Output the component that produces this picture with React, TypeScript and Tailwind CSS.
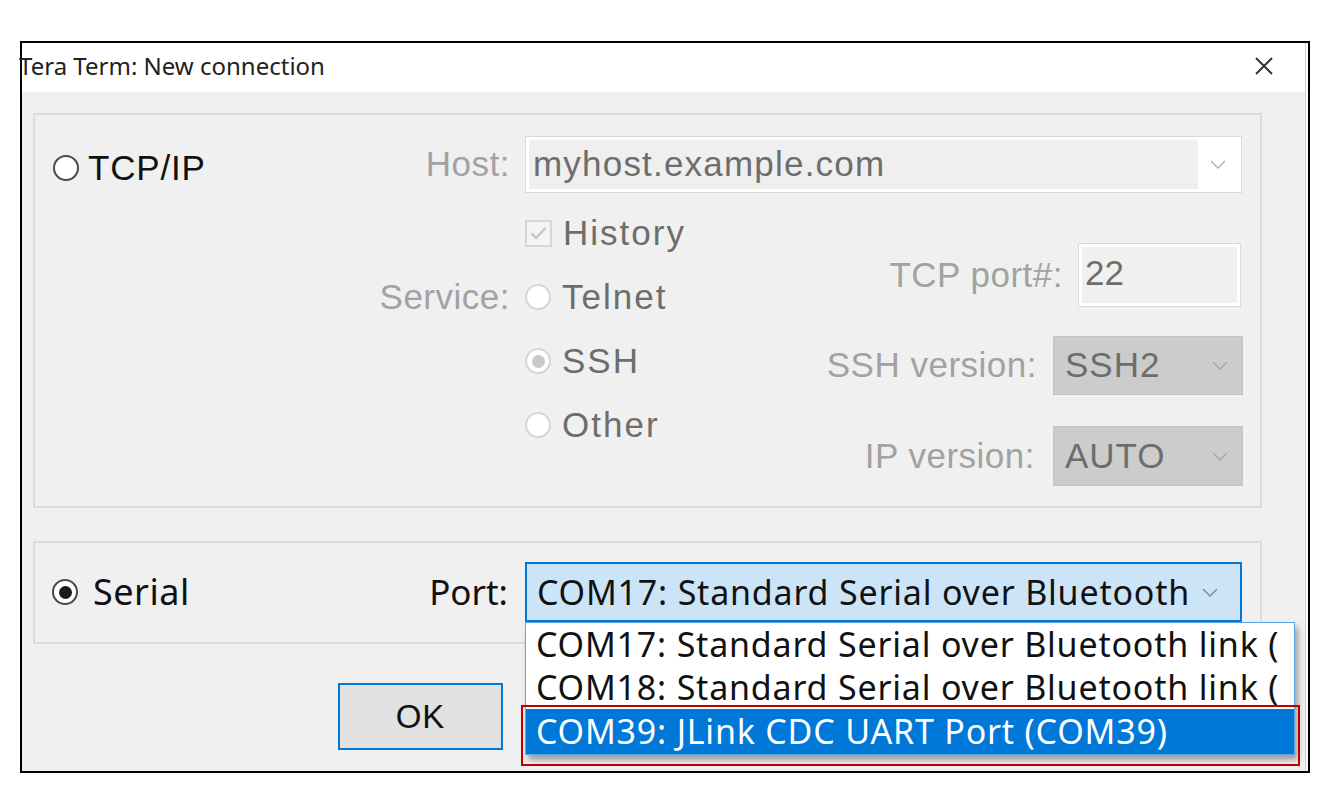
import React from 'react';

const arial = "font-['Liberation_Sans',Arial,sans-serif]";
const segoe = "font-['Noto_Sans','Open_Sans',sans-serif]";

const Chevron: React.FC<{ color: string }> = ({ color }) => (
  <svg width="16" height="9" viewBox="0 0 16 9" fill="none">
    <path d="M1 1l7 7 7-7" stroke={color} strokeWidth="1.5" />
  </svg>
);

interface RadioProps {
  checked?: boolean;
  disabled?: boolean;
}

const Radio: React.FC<RadioProps> = ({ checked, disabled }) => (
  <span
    className={`flex h-[26px] w-[26px] shrink-0 items-center justify-center rounded-full border-2 bg-white ${
      disabled ? 'border-[#d6d6d6]' : 'border-[#4a4a4a]'
    }`}
  >
    {checked && (
      <span className={`h-[13px] w-[13px] rounded-full ${disabled ? 'bg-[#c8c8c8]' : 'bg-[#1a1a1a]'}`} />
    )}
  </span>
);

const Checkbox: React.FC = () => (
  <span className="flex h-[27px] w-[27px] shrink-0 items-center justify-center border-2 border-[#d6d6d6] bg-[#f4f4f4]">
    <svg width="17" height="14" viewBox="0 0 17 14" fill="none">
      <path d="M1.5 7.5l4.5 4.5L15.5 2" stroke="#c2c2c2" strokeWidth="2.2" />
    </svg>
  </span>
);

const Option: React.FC<{ label: string; children: React.ReactNode }> = ({ label, children }) => (
  <div className="flex h-[64px] items-center gap-[11px]">
    {children}
    <span className={`${arial} text-[35px] tracking-[2px] text-[#6d6d6d]`}>{label}</span>
  </div>
);

const GrayLabel: React.FC<{ children: React.ReactNode }> = ({ children }) => (
  <span className={`${arial} text-[35px] tracking-[0.5px] text-[#a2a2a2]`}>{children}</span>
);

const DisabledSelect: React.FC<{ value: string; h: string }> = ({ value, h }) => (
  <div className={`flex w-[190px] items-center justify-between border border-[#c4c4c4] bg-[#cccccc] pl-[11px] pr-[14px] ${h}`}>
    <span className={`${arial} text-[35px] tracking-[1px] text-[#6d6d6d]`}>{value}</span>
    <Chevron color="#a9a9a9" />
  </div>
);

const ports = [
  'COM17: Standard Serial over Bluetooth link (',
  'COM18: Standard Serial over Bluetooth link (',
];

export default function App() {
  return (
    <div className="min-h-screen bg-white pl-[20px] pt-[41px]">
      <div className="relative h-[732px] w-[1290px] border-2 border-black bg-white">
        <div className="mr-[2px] flex h-full flex-col border-r border-[#d2d2d2]">
          {/* title bar */}
          <div className="flex h-[49px] shrink-0 items-center justify-between pb-[4px] pr-[32px]">
            <span className={`${segoe} -ml-[3px] text-[24px] text-[#222]`}>Tera Term: New connection</span>
            <svg width="18" height="18" viewBox="0 0 18 18" fill="none">
              <path d="M1 1l16 16M17 1L1 17" stroke="#333" strokeWidth="2" />
            </svg>
          </div>

          {/* body */}
          <div className="flex-1 bg-[#f0f0f0] px-[11px] pt-[21px]">
            {/* TCP/IP group */}
            <div className="w-[1229px] border-2 border-[#dcdcdc] pb-[20px] pt-[21px]">
              <div className="flex h-[57px] items-center">
                <div className="flex w-[475px] items-center justify-between pl-[18px]">
                  <div className="mt-[7px] flex items-center gap-[9px]">
                    <Radio />
                    <span className={`${arial} text-[35px] tracking-[0.8px] text-[#111]`}>TCP/IP</span>
                  </div>
                  <GrayLabel>Host:</GrayLabel>
                </div>
                <div className="ml-[15px] flex h-[57px] w-[717px] border border-[#dadada] bg-white p-[3px]">
                  <div className="flex flex-1 items-center bg-[#efefef] pl-[4px]">
                    <span className={`${arial} text-[35px] tracking-[1.2px] text-[#6d6d6d]`}>myhost.example.com</span>
                  </div>
                  <div className="flex w-[40px] items-center justify-center">
                    <Chevron color="#b4b4b4" />
                  </div>
                </div>
              </div>

              <div className="mt-[8px] flex">
                <div className="flex w-[475px] flex-col">
                  <div className="h-[64px]" />
                  <div className="flex h-[64px] items-center justify-end">
                    <GrayLabel>Service:</GrayLabel>
                  </div>
                </div>
                <div className="ml-[15px] flex flex-col">
                  <Option label="History">
                    <Checkbox />
                  </Option>
                  <Option label="Telnet">
                    <Radio disabled />
                  </Option>
                  <Option label="SSH">
                    <Radio disabled checked />
                  </Option>
                  <Option label="Other">
                    <Radio disabled />
                  </Option>
                </div>
                <div className="ml-auto mt-[42px] flex flex-col items-end pr-[17px]">
                  <div className="mr-[2px] flex items-center gap-[15px]">
                    <GrayLabel>TCP port#:</GrayLabel>
                    <div className="flex h-[64px] w-[163px] border border-[#dadada] bg-white p-[3px]">
                      <div className="flex flex-1 items-start bg-[#f0f0f0] pl-[3px]">
                        <span className={`${arial} text-[35px] text-[#6d6d6d]`}>22</span>
                      </div>
                    </div>
                  </div>
                  <div className="mt-[29px] flex items-center gap-[16px]">
                    <GrayLabel>SSH version:</GrayLabel>
                    <DisabledSelect value="SSH2" h="h-[59px]" />
                  </div>
                  <div className="mt-[31px] flex items-center gap-[18px]">
                    <GrayLabel>IP version:</GrayLabel>
                    <DisabledSelect value="AUTO" h="h-[60px]" />
                  </div>
                </div>
              </div>
            </div>

            {/* Serial group */}
            <div className="mt-[33px] w-[1229px] border-2 border-[#dcdcdc] pb-[20px] pt-[19px]">
              <div className="flex h-[60px] items-center">
                <div className="flex w-[473px] items-center justify-between pl-[17px]">
                  <div className="flex items-center gap-[15px]">
                    <Radio checked />
                    <span className={`${segoe} text-[36px] tracking-[0.5px] text-[#111]`}>Serial</span>
                  </div>
                  <span className={`${segoe} text-[35px] text-[#111]`}>Port:</span>
                </div>
                <div className="ml-[17px] flex h-[60px] w-[717px] items-center border-2 border-[#0078d7] bg-[#cce4f7] pl-[10px]">
                  <span className={`${segoe} whitespace-nowrap text-[34px] tracking-[0.8px] text-[#111]`}>
                    COM17: Standard Serial over Bluetooth
                  </span>
                  <span className="ml-[12px]">
                    <Chevron color="#8a8a8a" />
                  </span>
                </div>
              </div>
            </div>

            <button
              className={`${arial} ml-[305px] mt-[39px] flex h-[67px] w-[165px] items-center justify-center border-2 border-[#0078d7] bg-[#e1e1e1] text-[33px] tracking-[1px] text-[#111]`}
            >
              OK
            </button>
          </div>
        </div>

        {/* open dropdown list */}
        <div className="absolute left-[503px] top-[579px] w-[770px] border border-[#5fa6e6] bg-white shadow-[3px_5px_6px_rgba(0,0,0,0.35)]">
          {ports.map((p) => (
            <div key={p} className="flex h-[43px] items-center whitespace-nowrap pl-[10px]">
              <span className={`${segoe} text-[34px] tracking-[0.8px] text-[#111]`}>{p}</span>
            </div>
          ))}
          <div className="flex h-[45px] items-center whitespace-nowrap bg-[#0078d7] pl-[10px]">
            <span className={`${segoe} text-[34px] tracking-[0.8px] text-white`}>COM39: JLink CDC UART Port (COM39)</span>
          </div>
        </div>

        {/* highlight */}
        <div className="absolute left-[499px] top-[662px] h-[61px] w-[779px] border-2 border-[#c00000]" />
      </div>
    </div>
  );
}
